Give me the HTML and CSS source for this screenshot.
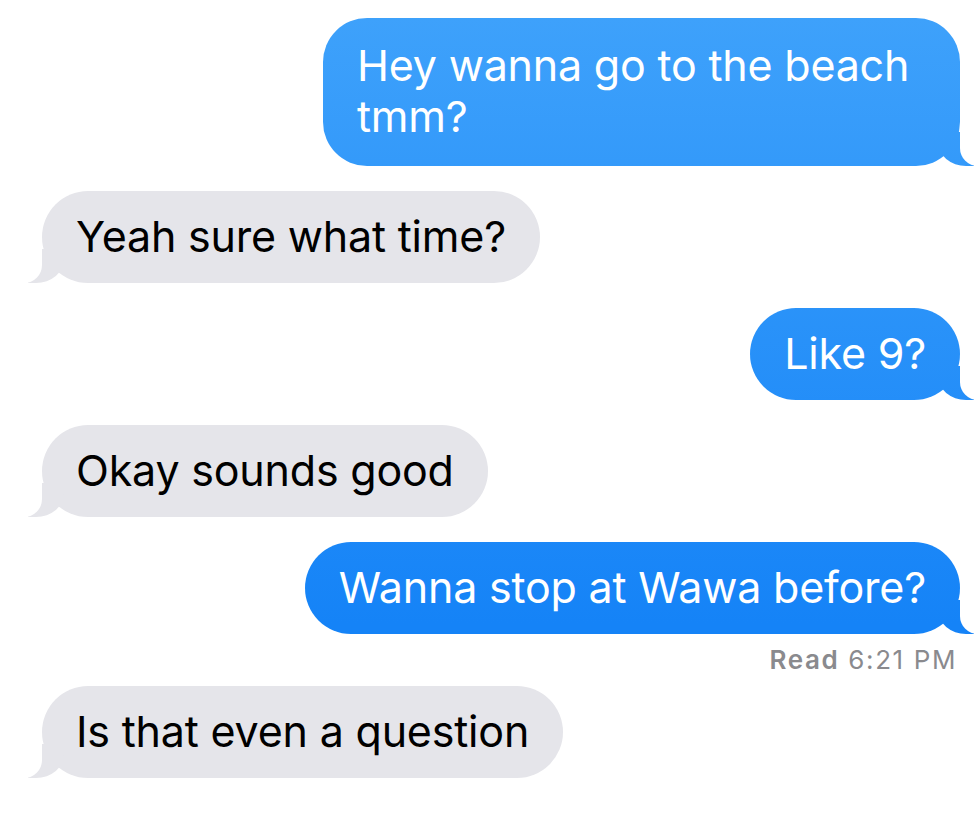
FILE: index.html
```html
<!DOCTYPE html>
<html lang="en">
<head>
    <meta charset="UTF-8">
    <meta name="viewport" content="width=device-width, initial-scale=1.0">
    <title>Messages</title>
    <link rel="stylesheet" href="styles.css">
</head>
<body>
    <div class="thread">
        <div class="bubble sent multi">Hey wanna go to the beach tmm?</div>
        <div class="bubble received">Yeah sure what time?</div>
        <div class="bubble sent">Like 9?</div>
        <div class="bubble received">Okay sounds good</div>
        <div class="last-sent">
            <div class="bubble sent">Wanna stop at Wawa before?</div>
            <div class="receipt"><b>Read</b> 6:21 PM</div>
        </div>
        <div class="bubble received">Is that even a question</div>
    </div>
</body>
</html>
```

FILE: styles.css
```css
body { margin: 0; background: #fff; font-family: Inter, "Liberation Sans", sans-serif; }
.thread { display: flex; flex-direction: column; align-items: flex-start; gap: 25px; padding: 18px 20px 0 42px; }
.bubble { position: relative; max-width: 600px; padding: 20px 34px 21px; border-radius: 46px; font-size: 43px; line-height: 51px; letter-spacing: -0.2px; }
.bubble.multi { max-width: 569px; padding: 22px 34px 24px; border-radius: 44px; }
.sent { align-self: flex-end; color: #fff; background: linear-gradient(#3fa2fb, #1583f7 75%) fixed; }
.received { color: #000; background: #e5e5ea; }
.last-sent { align-self: flex-end; display: flex; flex-direction: column; align-items: flex-end; }
.receipt { margin-top: 10px; margin-bottom: -14px; margin-right: 3px; font-size: 26px; letter-spacing: 1.6px; color: #8a8a8e; }
.receipt b { font-weight: 600; }

/* tails */
.bubble::before, .bubble::after { content: ""; position: absolute; bottom: 0; height: 34px; }
.sent::before { right: -14px; width: 36px; background: inherit; border-bottom-left-radius: 28px 24px; }
.sent::after { right: -46px; width: 46px; background: #fff; border-bottom-left-radius: 18px; }
.received::before { left: -14px; width: 36px; background: inherit; border-bottom-right-radius: 28px 24px; }
.received::after { left: -46px; width: 46px; background: #fff; border-bottom-right-radius: 18px; }
```
